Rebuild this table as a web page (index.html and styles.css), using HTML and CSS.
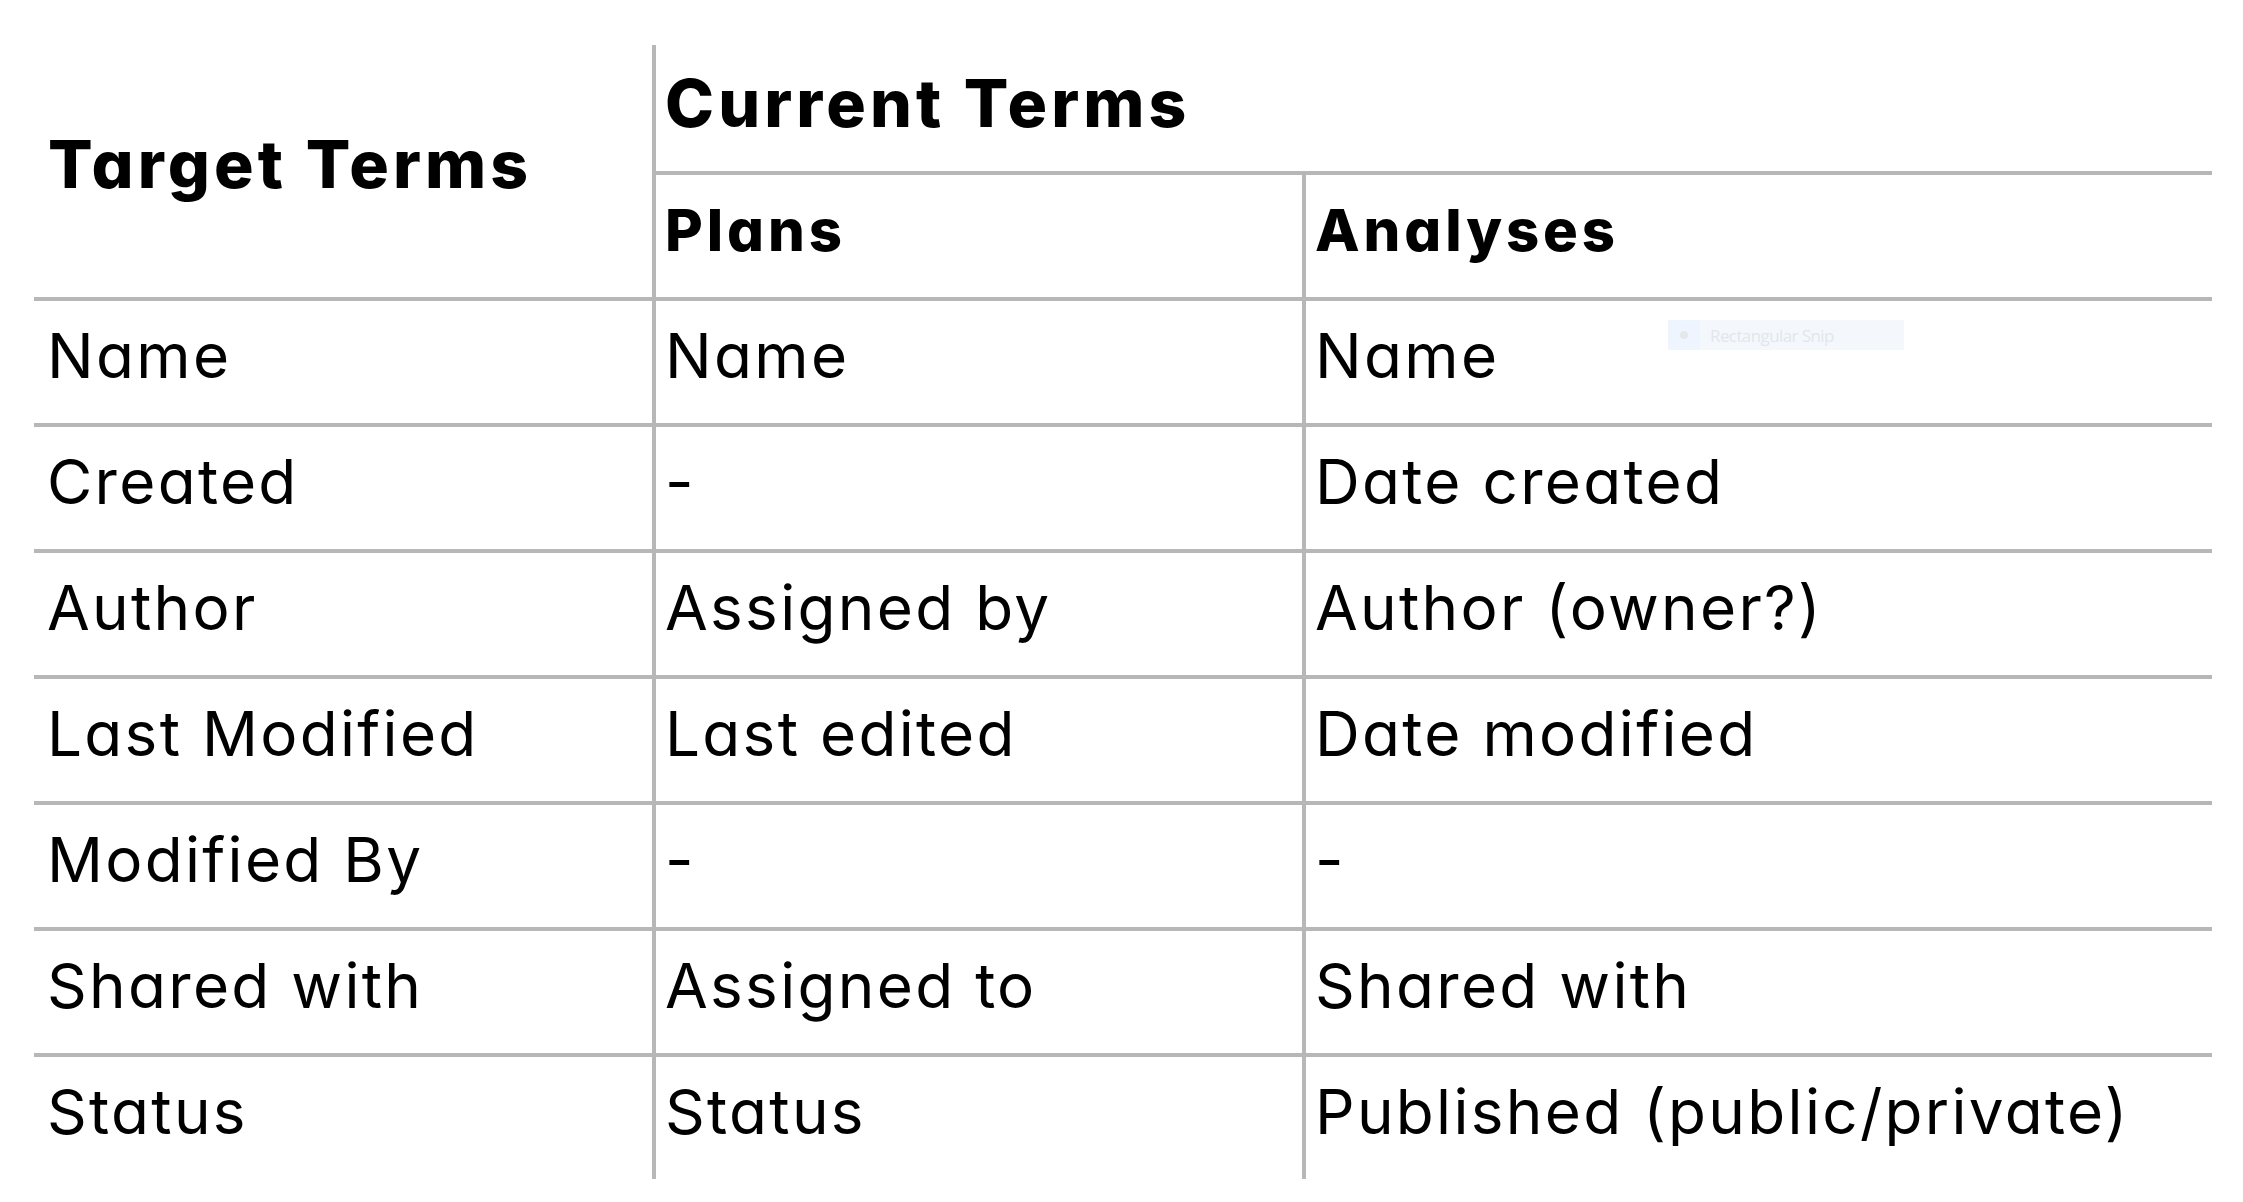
FILE: index.html
```html
<!DOCTYPE html>
<html lang="en">
<head>
<meta charset="utf-8">
<title>Terms mapping</title>
<link rel="stylesheet" href="styles.css">
</head>
<body>
<div class="terms">
  <div class="cell head target">Target Terms</div>
  <div class="cell head current">Current Terms</div>
  <div class="cell sub">Plans</div>
  <div class="cell sub">Analyses</div>

  <div class="cell first">Name</div>
  <div class="cell">Name</div>
  <div class="cell">Name</div>

  <div class="cell first">Created</div>
  <div class="cell">-</div>
  <div class="cell">Date created</div>

  <div class="cell first">Author</div>
  <div class="cell">Assigned by</div>
  <div class="cell">Author (owner?)</div>

  <div class="cell first">Last Modified</div>
  <div class="cell">Last edited</div>
  <div class="cell">Date modified</div>

  <div class="cell first">Modified By</div>
  <div class="cell">-</div>
  <div class="cell">-</div>

  <div class="cell first">Shared with</div>
  <div class="cell">Assigned to</div>
  <div class="cell">Shared with</div>

  <div class="cell first">Status</div>
  <div class="cell">Status</div>
  <div class="cell">Published (public/private)</div>
</div>

<div class="snip">
  <span class="snip-icon"><span class="snip-dot"></span></span>
  <span class="snip-label">Rectangular Snip</span>
</div>
</body>
</html>
```
FILE: styles.css
```css
html, body {
  margin: 0;
  padding: 0;
  background: #ffffff;
}

body {
  font-family: "Inter", "Noto Sans", sans-serif;
  font-feature-settings: "cv11" 1;
  color: #000000;
}

.terms {
  display: grid;
  grid-template-columns: 618px 650px 910px;
  grid-auto-rows: 126px;
  width: 2178px;
  margin: 45px 0 0 34px;
}

.cell {
  box-sizing: border-box;
  border-left: 4px solid #b7b7b7;
  border-top: 4px solid #b7b7b7;
  padding: 17px 0 0 9px;
  font-size: 62px;
  line-height: 76px;
  font-weight: 400;
  letter-spacing: 2.3px;
  white-space: nowrap;
}

.cell.first {
  border-left: none;
  padding-left: 13px;
}

.head {
  font-size: 66px;
  line-height: 80px;
  font-weight: 800;
  letter-spacing: 4.1px;
}

.target {
  grid-column: 1;
  grid-row: 1 / span 2;
  border-left: none;
  border-top: none;
  padding-top: 79px;
  padding-left: 14px;
}

.current {
  grid-column: 2 / span 2;
  grid-row: 1;
  border-top: none;
  padding-top: 18px;
}

.sub {
  font-size: 58px;
  line-height: 72px;
  font-weight: 800;
  letter-spacing: 3.9px;
  padding-top: 19px;
}

/* faint screen-snip tooltip overlay */
.snip {
  position: absolute;
  left: 1668px;
  top: 320px;
  width: 236px;
  height: 30px;
  display: flex;
  align-items: center;
  background: #f4f8fd;
}

.snip-icon {
  width: 32px;
  height: 30px;
  display: flex;
  align-items: center;
  justify-content: center;
  background: #eef5fe;
}

.snip-dot {
  width: 8px;
  height: 8px;
  border-radius: 50%;
  background: #e6e7e9;
}

.snip-label {
  margin-left: 10px;
  font-family: "Open Sans", "Noto Sans", sans-serif;
  font-feature-settings: normal;
  font-size: 17px;
  letter-spacing: -0.6px;
  color: #e3e6ea;
}
```
